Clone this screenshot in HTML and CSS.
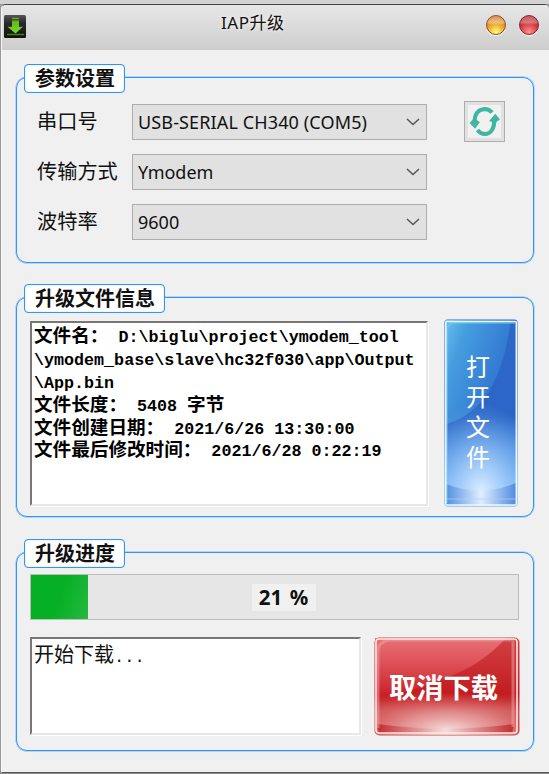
FILE: index.html
```html
<!DOCTYPE html>
<html lang="zh-CN">
<head>
<meta charset="utf-8">
<title>IAP升级</title>
<link rel="stylesheet" href="styles.css">
</head>
<body>
<main class="window">
  <header class="titlebar">
    <svg class="app-icon" viewBox="0 0 22 23">
      <defs>
        <linearGradient id="tile" x2="0" y2="1"><stop offset="0" stop-color="#555"/><stop offset=".35" stop-color="#292929"/><stop offset="1" stop-color="#111"/></linearGradient>
        <linearGradient id="arrow" x2="0" y2="1"><stop offset="0" stop-color="#5cae16"/><stop offset="1" stop-color="#7bd62d"/></linearGradient>
      </defs>
      <rect width="22" height="23" rx="1.5" fill="url(#tile)"/>
      <path d="M8 2.700h7v1.500H8zM8 5.500h7v6.300h4L11.500 18.500 3.500 11.800H8z" fill="url(#arrow)"/>
      <path d="M3 19.500h17" stroke="#3d8a12" stroke-width="1.400"/>
    </svg>
    <h1 class="title">IAP升级</h1>
    <div class="controls">
      <button class="orb amber" aria-label="最小化"></button>
      <button class="orb red" aria-label="关闭"></button>
    </div>
  </header>

  <section class="group settings">
    <h2 class="legend">参数设置</h2>
    <div class="settings-body">
      <div class="fields">
        <span class="label">串口号</span>
        <div class="select"><span class="port">USB-SERIAL CH340 (COM5)</span><svg class="chev" viewBox="0 0 14 8"><path d="M1 1l6 5.500 6-5.500"/></svg></div>
        <span class="label">传输方式</span>
        <div class="select"><span class="mode">Ymodem</span><svg class="chev" viewBox="0 0 14 8"><path d="M1 1l6 5.500 6-5.500"/></svg></div>
        <span class="label">波特率</span>
        <div class="select"><span class="baud">9600</span><svg class="chev" viewBox="0 0 14 8"><path d="M1 1l6 5.500 6-5.500"/></svg></div>
      </div>
      <button class="refresh" aria-label="刷新">
        <svg viewBox="0 0 34 34">
          <rect x="1" y="1" width="32" height="32" fill="#f1f1f1"/>
          <path d="M7.500 18C7 10 11 5.200 17 4.800c3 0 5.500 1.200 7.300 3.500M26.300 15C27 23 23.500 29 17.500 29.200c-3.200 0-5.600-1.500-7.200-4" fill="none" stroke="#3fb6a0" stroke-width="4"/>
          <path d="M2.500 18.500l4.500-5 5.500 4.300L7.800 24zM27.500 9.500l4.500 5.500-5 3.500-5.500-2z" fill="#3fb6a0"/>
        </svg>
      </button>
    </div>
  </section>

  <section class="group file">
    <h2 class="legend">升级文件信息</h2>
    <div class="file-body">
      <div class="sunken info">
        <p><b>文件名：</b> D:\biglu\project\ymodem_tool</p>
        <p>\ymodem_base\slave\hc32f030\app\Output</p>
        <p>\App.bin</p>
        <p><b>文件长度：</b> 5408 <b>字节</b></p>
        <p><b>文件创建日期：</b> 2021/6/26 13:30:00</p>
        <p><b>文件最后修改时间：</b> 2021/6/28 0:22:19</p>
      </div>
      <button class="glass open">
        <svg class="glass-bg" viewBox="0 0 74 188" preserveAspectRatio="none">
          <defs>
            <linearGradient id="blueBase" x2="0" y2="1"><stop offset="0" stop-color="#2c68c8"/><stop offset=".52" stop-color="#2b66c6"/><stop offset=".7" stop-color="#4a8de0"/><stop offset=".9" stop-color="#6fb2f5"/><stop offset="1" stop-color="#5ea5f0"/></linearGradient>
            <linearGradient id="blueShine" x2=".9" y2=".55"><stop offset="0" stop-color="#68bfee"/><stop offset=".3" stop-color="#459de0"/><stop offset="1" stop-color="#3073cf"/></linearGradient>
            <radialGradient id="blueGlow" cx=".5" cy=".88" r=".85"><stop offset="0" stop-color="#e6f2ff" stop-opacity=".95"/><stop offset=".4" stop-color="#b4d7fc" stop-opacity=".65"/><stop offset="1" stop-color="#78b4f5" stop-opacity="0"/></radialGradient>
            <linearGradient id="blueFoot" x2="1"><stop offset="0" stop-color="#3f80d8"/><stop offset=".5" stop-color="#e5efff"/><stop offset="1" stop-color="#3f7bd7"/></linearGradient>
          </defs>
          <rect x=".5" y=".5" width="73" height="187" rx="3" fill="url(#blueBase)"/>
          <path d="M1 1H67C61 45 48 75 32 88 20 99 10 103 1 105z" fill="url(#blueShine)"/>
          <rect x="1" y="80" width="72" height="107" fill="url(#blueGlow)"/>
          <path d="M2 165Q37 179 72 164V186H2z" fill="url(#blueFoot)" opacity=".75"/>
          <path d="M3 184V12Q3 4 12 4H71" fill="none" stroke="#83cdf0" stroke-width="2" opacity=".45"/>
          <rect x="1.800" y="2.500" width="70.500" height="183.500" rx="1" fill="none" stroke="#eef8ff" stroke-width="1.500"/>
          <path d="M2 180H72" stroke="#b5cff4" opacity=".7"/>
        </svg>
        <span class="open-text"><i>打</i><i>开</i><i>文</i><i>件</i></span>
      </button>
    </div>
  </section>

  <section class="group progress">
    <h2 class="legend">升级进度</h2>
    <div class="bar">
      <div class="fill" style="width:57px"></div>
      <span class="percent">21 %</span>
    </div>
    <div class="progress-body">
      <div class="sunken log">开始下载<span class="dots">...</span></div>
      <button class="glass cancel">
        <svg class="glass-bg" viewBox="0 0 146 99" preserveAspectRatio="none">
          <defs>
            <linearGradient id="redBase" x2="0" y2="1"><stop offset="0" stop-color="#d04246"/><stop offset=".57" stop-color="#c31c20"/><stop offset=".75" stop-color="#ce5052"/><stop offset="1" stop-color="#d34648"/></linearGradient>
            <linearGradient id="redShine" x2="0" y2="1"><stop offset="0" stop-color="#e87277"/><stop offset=".5" stop-color="#dc4c53"/><stop offset="1" stop-color="#c92228"/></linearGradient>
            <radialGradient id="redGlow" cx=".5" cy=".9" r=".75"><stop offset="0" stop-color="#f7dfdf"/><stop offset=".45" stop-color="#e9a3a3" stop-opacity=".75"/><stop offset="1" stop-color="#d66" stop-opacity="0"/></radialGradient>
            <linearGradient id="redFoot" x2="1"><stop offset="0" stop-color="#c32c2e"/><stop offset=".5" stop-color="#f5dcdc"/><stop offset="1" stop-color="#c32c2e"/></linearGradient>
          </defs>
          <rect x=".5" y=".5" width="145" height="98" rx="5" fill="url(#redBase)"/>
          <path d="M1 1H132C112 23 90 35 68 42 44 53 20 57 1 58z" fill="url(#redShine)"/>
          <rect x="2" y="48" width="142" height="50" fill="url(#redGlow)"/>
          <path d="M3 87Q73 96 140 87L138 96H5z" fill="url(#redFoot)"/>
          <path d="M4 91V15Q4 4 16 3H139V90" fill="none" stroke="#f0a6a9" stroke-width="3" opacity=".5"/>
          <rect x="2" y="2" width="141" height="94" rx="3" fill="none" stroke="#fae9ea" stroke-width="1.600"/>
        </svg>
        <span class="cancel-text">取消下载</span>
      </button>
    </div>
  </section>
</main>
</body>
</html>
```
FILE: styles.css
```css
* { box-sizing: border-box; }
body {
  margin: 0;
  width: 549px;
  height: 774px;
  overflow: hidden;
  padding: 4px 0 0 1px;
  background: linear-gradient(#d2d2d2 0 4px, #999 4px 770px, #8d8d8d 770px);
  font-family: "Noto Sans", "Noto Sans CJK SC", sans-serif;
  color: #111;
}
h1, h2, p { margin: 0; font-weight: normal; }
button { padding: 0; border: 0; font: inherit; }
.window {
  height: 769px;
  border-top: 1px solid #444;
  border-bottom: 1px solid #555;
  border-left: 1px solid #f8f8f8;
  border-radius: 5px 5px 0 0;
  background: #f0f0f0;
}
.titlebar {
  display: flex;
  height: 45px;
  padding: 0 10px 0 2px;
  border-radius: 4px 4px 0 0;
  background: linear-gradient(#e7e7e7, #cdcdcd);
}
.app-icon { width: 22px; height: 23px; margin-top: 10px; }
.title {
  flex: 1;
  margin-left: 195px;
  padding-top: 5px;
  font: 17px/26px "Noto Sans", "Noto Sans CJK SC", sans-serif;
  letter-spacing: .5px;
  text-shadow: 0 0 4px #fff;
}
.controls { display: flex; gap: 13px; padding-top: 10px; }
.orb {
  width: 20px;
  height: 20px;
  border-radius: 50%;
  box-shadow: 0 1px 1px #fff;
}
.amber {
  border: 1px solid #86502e;
  background: linear-gradient(#fff5 10%, #fff6 35%, transparent 50%), radial-gradient(circle at 50% 90%, #ffff75, #eda92c 45%, #c96008 85%);
}
.red {
  border: 1px solid #7c2931;
  background: linear-gradient(#fff5 10%, #fff5 35%, transparent 50%), radial-gradient(circle at 50% 90%, #ff9292, #d33940 50%, #a50d17 85%);
}
.group {
  width: 518px;
  margin-left: 14px;
  border: 1px solid #2f94fb;
  border-radius: 11px;
  box-shadow: 0 0 0 .5px #78b9fc;
}
.settings { height: 186px; margin-top: 27px; }
.file { height: 220px; margin-top: 34px; }
.progress { height: 199px; margin-top: 35px; }
.legend {
  width: max-content;
  height: 29px;
  margin: -14px 0 0 7px;
  padding: 0 9px 0 10px;
  border: 1px solid #2f94fb;
  border-radius: 4px;
  background: #fff;
  box-shadow: inset 0 0 1px #4ba3fd;
  font: bold 20px/26px "Noto Sans CJK SC", sans-serif;
}
.settings-body {
  display: flex;
  padding: 11px 0 0 20px;
  gap: 37px;
}
.fields {
  display: grid;
  grid-template-columns: 95px 295px;
  grid-template-rows: repeat(3, 36px);
  row-gap: 14px;
}
.label { font: 20.2px/34px "Noto Sans CJK SC", sans-serif; white-space: nowrap; }
.select {
  display: flex;
  align-items: center;
  justify-content: space-between;
  padding: 0 6px 0 5px;
  border: 1px solid #adadad;
  background: #e1e1e1;
  font-size: 18px;
  white-space: nowrap;
}
.port { letter-spacing: .13px; }
.chev { width: 14px; height: 8px; fill: none; stroke: #555; stroke-width: 1.5; }
.refresh {
  width: 41px;
  height: 41px;
  margin-top: -3px;
  padding: 2px;
  border: 1px solid #adadad;
  background: #e1e1e1;
}
.refresh svg { display: block; width: 35px; height: 35px; }
.file-body { display: flex; gap: 16px; padding: 8px 0 0 13px; }
.sunken {
  border: 2px solid #777;
  border-right-color: #e8e8e8;
  border-bottom-color: #e8e8e8;
  background: #fff;
  box-shadow: 1px 1px #fff;
}
.info {
  width: 398px;
  height: 185px;
  padding: 4px 0 0 2px;
  color: #000;
  font: 16.7px/22.9px "Liberation Mono", monospace;
  white-space: nowrap;
}
.info p { height: 22.9px; font-weight: bold; }
.info b { font: bold 18.6px/0 "Noto Sans CJK SC", sans-serif; }
.glass { position: relative; background: none; color: #fff; }
.glass-bg { position: absolute; inset: 0; width: 100%; height: 100%; }
.open { width: 74px; height: 188px; margin-top: -2px; }
.open-text { position: relative; display: grid; justify-items: center; padding-right: 6px; margin-top: -4px; }
.open-text i { font: 24px/30px "Noto Sans CJK SC", sans-serif; }
.bar {
  display: grid;
  grid-template-columns: 1fr;
  width: 489px;
  height: 46px;
  margin: 6px 0 0 13px;
  border: 1px solid #bcbcbc;
  background: #e6e6e6;
}
.fill, .percent { grid-area: 1 / 1; }
.fill { background: linear-gradient(110deg, #06b025 50%, #25b940); }
.percent {
  place-self: center;
  width: 64px;
  height: 27px;
  margin-left: 18px;
  background: #f0f0f0;
  font: bold 20.5px/27px "Noto Sans", sans-serif;
  word-spacing: 2px;
  text-align: center;
}
.progress-body { display: flex; gap: 13px; padding: 17px 0 0 13px; }
.log {
  width: 331px;
  height: 98px;
  padding: 2px 0 0 2px;
  font: 20px/26px "Noto Sans CJK SC", sans-serif;
}
.dots { font: 17px/20px "Liberation Mono", monospace; }
.cancel { width: 146px; height: 99px; }
.cancel-text { position: relative; top: -1px; font: bold 27.3px/40px "Noto Sans CJK SC", sans-serif; margin-right: 7px; }
```
